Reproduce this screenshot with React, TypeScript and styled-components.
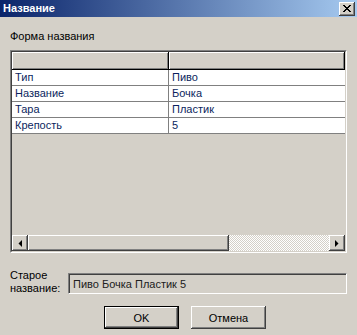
import React from "react";
import styled, { createGlobalStyle } from "styled-components";

const Global = createGlobalStyle`
  html, body { margin: 0; padding: 0; background: #d4d0c8; }
  body { font-family: "Liberation Sans", Arial, sans-serif; font-size: 11px; }
`;

const Window = styled.div`
  width: 357px;
  height: 335px;
  background: #d4d0c8;
  display: flex;
  flex-direction: column;
  overflow: hidden;
  color: #000;
`;

const TitleBar = styled.div`
  height: 17px;
  flex: none;
  display: flex;
  align-items: center;
  justify-content: space-between;
  padding: 0 2px 0 3px;
  background: linear-gradient(to right, #0a246a, #a6caf0);
`;

const TitleText = styled.span`
  color: #fff;
  font-weight: bold;
  font-size: 11px;
  line-height: 13px;
`;

const CloseButton = styled.div`
  width: 16px;
  height: 14px;
  box-sizing: border-box;
  background: #d4d0c8;
  display: flex;
  align-items: center;
  justify-content: center;
  box-shadow: inset -1px -1px #404040, inset 1px 1px #fff, inset -2px -2px #808080;
`;

const Body = styled.div`
  padding: 13px 10px 0 10px;
  display: flex;
  flex-direction: column;
`;

const GroupLabel = styled.div`
  line-height: 13px;
  height: 13px;
`;

const GridFrame = styled.div`
  margin-top: 7px;
  height: 203px;
  box-sizing: border-box;
  border: 1px solid;
  border-color: #808080 #fff #fff #808080;
  display: flex;
  flex-direction: column;
`;

const GridInner = styled.div`
  flex: 1;
  border: 1px solid;
  border-color: #404040 #d4d0c8 #d4d0c8 #404040;
  display: flex;
  flex-direction: column;
  overflow: hidden;
`;

const HeaderRow = styled.div`
  height: 18px;
  flex: none;
  display: flex;
  box-sizing: border-box;
  border-bottom: 1px solid #000;
  box-shadow: inset 0 -1px #808080;
`;

const HeaderCell = styled.div<{ $w?: number }>`
  ${(p) => (p.$w ? `width: ${p.$w}px; flex: none;` : "flex: 1;")}
  box-sizing: border-box;
  height: 17px;
  border-right: 1px solid #000;
  box-shadow: inset 1px 1px #fff, inset -1px 0 #808080;
`;

const DataRow = styled.div`
  height: 16px;
  flex: none;
  display: flex;
  box-sizing: border-box;
  background: #fff;
  border-bottom: 1px solid #808080;
`;

const DataCell = styled.div<{ $w?: number }>`
  ${(p) => (p.$w ? `width: ${p.$w}px; flex: none; border-right: 1px solid #808080;` : "flex: 1;")}
  box-sizing: border-box;
  padding-left: 3px;
  line-height: 15px;
  color: #0c1f5e;
  white-space: nowrap;
`;

const EmptyArea = styled.div`
  flex: 1;
`;

const ScrollBar = styled.div`
  height: 16px;
  flex: none;
  display: flex;
`;

const ScrollButton = styled.div`
  width: 16px;
  height: 16px;
  flex: none;
  box-sizing: border-box;
  display: flex;
  align-items: center;
  justify-content: center;
  background: #d4d0c8;
  box-shadow: inset -1px -1px #404040, inset 1px 1px #fff, inset -2px -2px #808080;
`;

const Thumb = styled.div<{ $w: number }>`
  width: ${(p) => p.$w}px;
  flex: none;
  box-sizing: border-box;
  background: #d4d0c8;
  box-shadow: inset -1px -1px #404040, inset 1px 1px #fff, inset -2px -2px #808080;
`;

const Track = styled.div`
  flex: 1;
  background-color: #d4d0c8;
  background-image: repeating-conic-gradient(#fff 0 25%, #d4d0c8 0 50%);
  background-size: 2px 2px;
`;

const OldRow = styled.div`
  margin-top: 16px;
  display: flex;
  align-items: flex-start;
`;

const OldLabel = styled.div`
  width: 58px;
  flex: none;
  line-height: 13px;
`;

const OldBox = styled.div`
  margin-top: 4px;
  flex: 1;
  height: 21px;
  box-sizing: border-box;
  border: 1px solid;
  border-color: #808080 #fff #fff #808080;
  box-shadow: inset 1px 1px #404040;
  padding: 3px 0 0 4px;
  line-height: 15px;
  color: #202020;
`;

const ButtonRow = styled.div`
  margin-top: 11px;
  display: flex;
  gap: 12px;
  padding-left: 94px;
`;

const Button = styled.div<{ $default?: boolean }>`
  width: 75px;
  height: 23px;
  box-sizing: border-box;
  display: flex;
  align-items: center;
  justify-content: center;
  background: #d4d0c8;
  font-size: 11px;
  ${(p) =>
    p.$default
      ? `border: 1px solid #000; box-shadow: inset -1px -1px #404040, inset 1px 1px #fff, inset -2px -2px #808080;`
      : `box-shadow: inset -1px -1px #404040, inset 1px 1px #fff, inset -2px -2px #808080;`}
`;

const rows = [
  ["Тип", "Пиво"],
  ["Название", "Бочка"],
  ["Тара", "Пластик"],
  ["Крепость", "5"],
];

export default function App() {
  return (
    <>
      <Global />
      <Window>
        <TitleBar>
          <TitleText>Название</TitleText>
          <CloseButton>
            <svg width="8" height="7" viewBox="0 0 8 7">
              <path d="M0 0h2v1h1v1h2v-1h1v-1h2v1h-1v1h-1v1h-1v1h1v1h1v1h1v1h-2v-1h-1v-1h-2v1h-1v1h-2v-1h1v-1h1v-1h1v-1h-1v-1h-1v-1h-1z" fill="#000" />
            </svg>
          </CloseButton>
        </TitleBar>
        <Body>
          <GroupLabel>Форма названия</GroupLabel>
          <GridFrame>
            <GridInner>
              <HeaderRow>
                <HeaderCell $w={157} />
                <HeaderCell />
              </HeaderRow>
              {rows.map(([a, b]) => (
                <DataRow key={a}>
                  <DataCell $w={157}>{a}</DataCell>
                  <DataCell>{b}</DataCell>
                </DataRow>
              ))}
              <EmptyArea />
              <ScrollBar>
                <ScrollButton>
                  <svg width="4" height="7" viewBox="0 0 4 7">
                    <polygon points="4,0 4,7 0.5,3.5" fill="#000" />
                  </svg>
                </ScrollButton>
                <Thumb $w={201} />
                <Track />
                <ScrollButton>
                  <svg width="4" height="7" viewBox="0 0 4 7">
                    <polygon points="0,0 0,7 3.5,3.5" fill="#000" />
                  </svg>
                </ScrollButton>
              </ScrollBar>
            </GridInner>
          </GridFrame>
          <OldRow>
            <OldLabel>
              Старое
              <br />
              название:
            </OldLabel>
            <OldBox>Пиво Бочка Пластик 5</OldBox>
          </OldRow>
          <ButtonRow>
            <Button $default>OK</Button>
            <Button>Отмена</Button>
          </ButtonRow>
        </Body>
      </Window>
    </>
  );
}
